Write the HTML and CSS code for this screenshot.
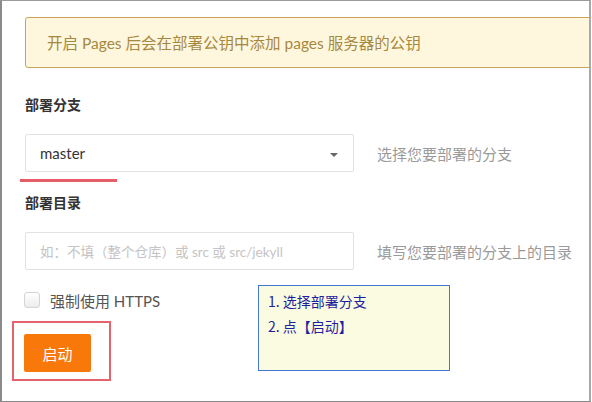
FILE: index.html
```html
<!DOCTYPE html>
<html lang="zh-CN">
<head>
<meta charset="utf-8">
<title>Pages</title>
<link rel="stylesheet" href="styles.css">
</head>
<body>
<div class="frame">
  <div class="alert">开启 Pages 后会在部署公钥中添加 pages 服务器的公钥</div>

  <div class="label first">部署分支</div>
  <div class="row">
    <div class="select">
      <span class="value">master</span>
      <span class="caret"></span>
    </div>
    <span class="hint">选择您要部署的分支</span>
    <span class="mark-line"></span>
  </div>

  <div class="label second">部署目录</div>
  <div class="row row-input">
    <div class="input"><span class="placeholder">如：不填（整个仓库）或 src 或 src/jekyll</span></div>
    <span class="hint">填写您要部署的分支上的目录</span>
  </div>

  <label class="check">
    <span class="box"></span>
    <span class="check-text">强制使用 HTTPS</span>
  </label>

  <div class="btn-wrap">
    <span class="mark-box"></span>
    <button class="btn" type="button">启动</button>
  </div>

  <div class="note">
    <div>1. 选择部署分支</div>
    <div>2. 点【启动】</div>
  </div>
</div>
</body>
</html>
```

FILE: styles.css
```css
html, body {
  margin: 0;
  padding: 0;
  background: #ffffff;
}

body {
  font-family: "Lato", "Noto Sans CJK SC", sans-serif;
  color: #333333;
}

.frame {
  position: relative;
  width: 591px;
  height: 402px;
  box-sizing: border-box;
  border-left: 2px solid #8a8a8a;
  border-top: 1px solid #9a9a9a;
  border-right: 2px solid #a8a8a8;
  border-bottom: 1px solid #8a8a8a;
  padding: 16px 0 0 23px;
  overflow: hidden;
}

.alert {
  width: 600px;
  box-sizing: border-box;
  background: #fef7dd;
  border: 1px solid #c9a457;
  border-radius: 3px;
  padding: 14px 0 13px 21px;
  font-size: 15.5px;
  line-height: 22px;
  color: #a7883f;
  white-space: nowrap;
}

.label {
  font-size: 14px;
  line-height: 20px;
  font-weight: bold;
  color: #333333;
}

.label.first {
  margin-top: 27px;
}

.label.second {
  margin-top: 21px;
}

.row {
  position: relative;
  display: flex;
  align-items: center;
  gap: 23px;
  margin-top: 19px;
}

.select,
.input {
  width: 329px;
  height: 38px;
  box-sizing: border-box;
  border: 1px solid #e2e2e2;
  border-radius: 2px;
  display: flex;
  align-items: center;
  padding: 0 14px;
  background: #ffffff;
}

.select {
  justify-content: space-between;
}

.value {
  font-size: 15px;
  color: #333333;
}

.caret {
  width: 0;
  height: 0;
  border-left: 4px solid transparent;
  border-right: 4px solid transparent;
  border-top: 4px solid #666666;
  margin-top: 3px;
  margin-right: 1px;
}

.placeholder {
  font-size: 13.5px;
  color: #c4c4c4;
  white-space: nowrap;
}

.hint {
  font-size: 15px;
  color: #9a9a9a;
  white-space: nowrap;
}

.mark-line {
  position: absolute;
  left: -5px;
  top: 45px;
  width: 97px;
  height: 3px;
  background: #e65d67;
}

.check {
  display: flex;
  align-items: center;
  gap: 10px;
  margin-top: 20px;
  height: 20px;
  margin-left: -1px;
}

.box {
  width: 16px;
  height: 16px;
  box-sizing: border-box;
  border: 1px solid #d4d4d4;
  border-radius: 3px;
  background: linear-gradient(#ffffff, #ececec);
}

.check-text {
  font-size: 15px;
  color: #555555;
}

.btn-wrap {
  position: relative;
  margin-top: 24px;
  margin-left: -1px;
  width: 67px;
}

.btn {
  display: block;
  width: 67px;
  height: 38px;
  border: none;
  border-radius: 2px;
  background: #f8790a;
  color: #ffffff;
  font-family: "Noto Sans CJK SC", sans-serif;
  font-size: 15px;
  padding: 0;
}

.mark-box {
  position: absolute;
  left: -12px;
  top: -13px;
  width: 99px;
  height: 60px;
  box-sizing: border-box;
  border: 2px solid #e5646c;
}

.note {
  position: absolute;
  left: 256px;
  top: 284px;
  width: 192px;
  height: 86px;
  box-sizing: border-box;
  border: 1px solid #4677d0;
  background: #fbfbe2;
  padding: 3px 0 0 9px;
  font-family: "Noto Sans CJK SC", sans-serif;
  font-size: 14px;
  line-height: 25px;
  color: #1f1f9e;
}
```
